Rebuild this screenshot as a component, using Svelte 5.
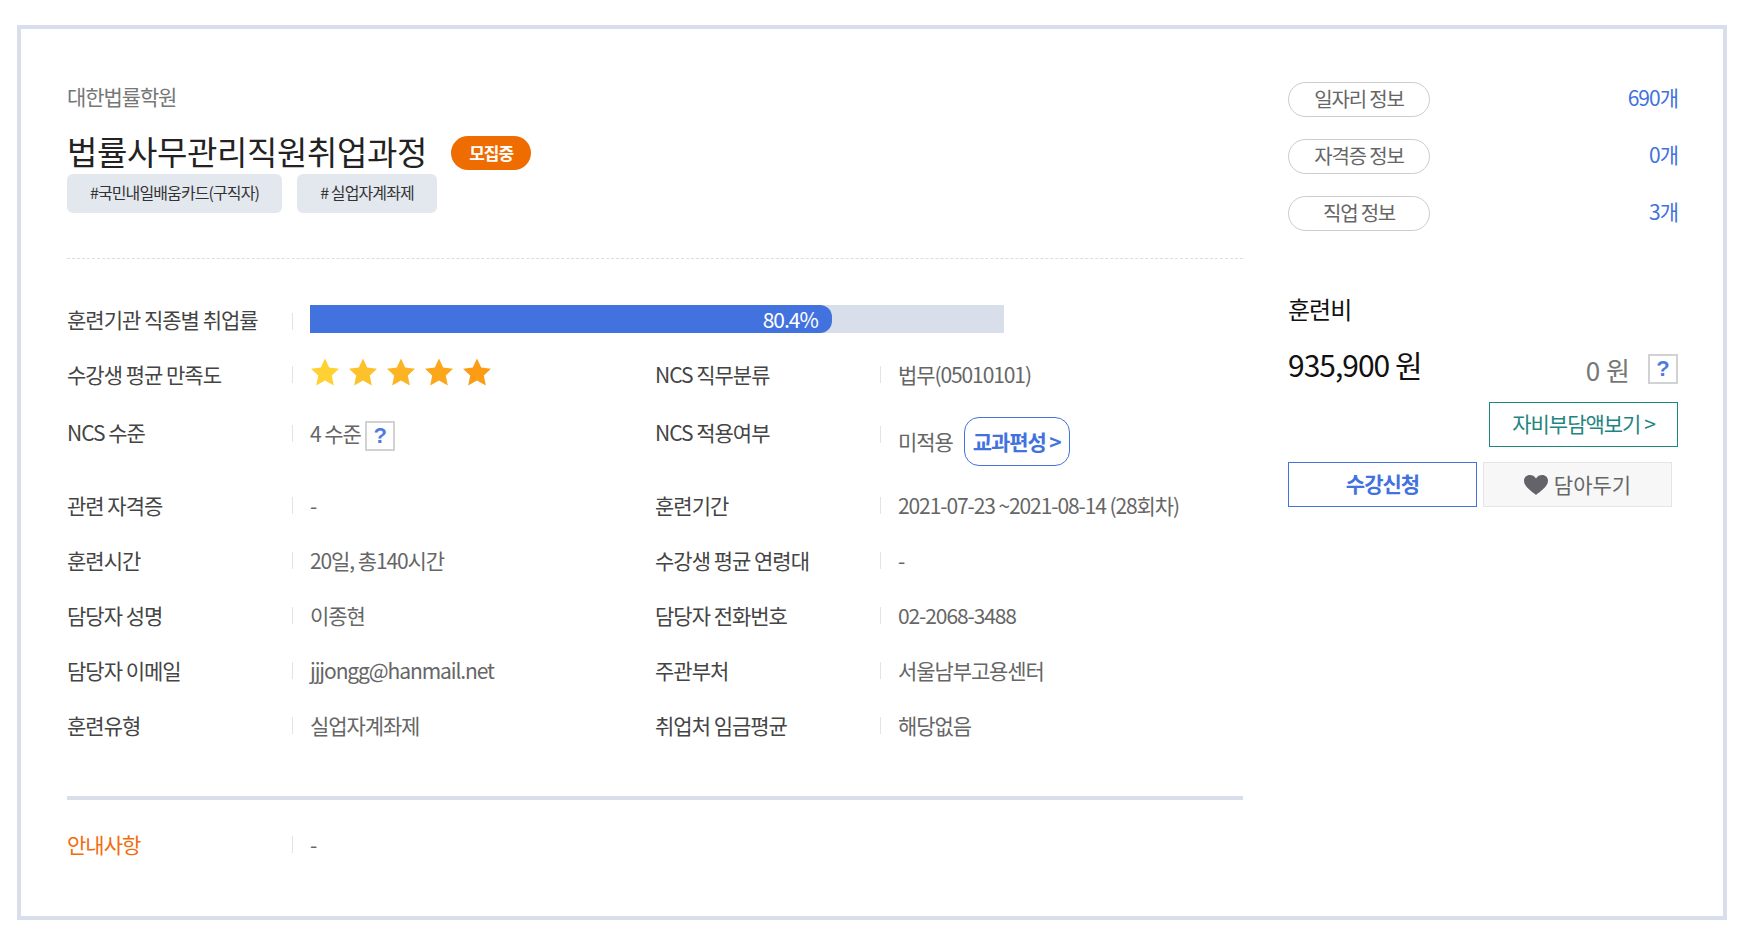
<script>
	const starColors = ['#ffd133', '#fdc12b', '#fcb424', '#fca61c', '#fb9c14'];

	const rows = [
		['관련 자격증', '-', '훈련기간', '2021-07-23 ~2021-08-14 (28회차)'],
		['훈련시간', '20일, 총140시간', '수강생 평균 연령대', '-'],
		['담당자 성명', '이종현', '담당자 전화번호', '02-2068-3488'],
		['담당자 이메일', 'jjjongg@hanmail.net', '주관부처', '서울남부고용센터'],
		['훈련유형', '실업자계좌제', '취업처 임금평균', '해당없음']
	];

	const infos = [
		['일자리 정보', '690개'],
		['자격증 정보', '0개'],
		['직업 정보', '3개']
	];
</script>

<div class="panel">
	<div class="main">
		<div class="academy">대한법률학원</div>
		<div class="title-line">
			<h1>법률사무관리직원취업과정</h1>
			<span class="badge">모집중</span>
		</div>
		<div class="tags">
			<span class="tag tag-a">#국민내일배움카드(구직자)</span>
			<span class="tag tag-b"># 실업자계좌제</span>
		</div>

		<div class="dashed"></div>

		<div class="row">
			<div class="label">훈련기관 직종별 취업률</div>
			<div class="bar-wrap">
				<div class="bar">
					<div class="fill">80.4%</div>
				</div>
			</div>
		</div>

		<div class="row">
			<div class="label">수강생 평균 만족도</div>
			<div class="value stars">
				{#each starColors as color}
					<svg width="30" height="28" viewBox="0 0 30 28">
						<path
							d="M15 0.5 L19.2 9.6 L29 10.8 L21.8 17.6 L23.8 27.5 L15 22.5 L6.2 27.5 L8.2 17.6 L1 10.8 L10.8 9.6 Z"
							fill={color}
						/>
					</svg>
				{/each}
			</div>
			<div class="label">NCS 직무분류</div>
			<div class="value">법무(05010101)</div>
		</div>

		<div class="row tall">
			<div class="label">NCS 수준</div>
			<div class="value level">4 수준 <span class="help">?</span></div>
			<div class="label">NCS 적용여부</div>
			<div class="value applied">
				<span class="applied-text">미적용</span>
				<span class="curriculum">교과편성 &gt;</span>
			</div>
		</div>

		{#each rows as r}
			<div class="row">
				<div class="label">{r[0]}</div>
				<div class="value">{r[1]}</div>
				<div class="label">{r[2]}</div>
				<div class="value">{r[3]}</div>
			</div>
		{/each}

		<div class="thick"></div>

		<div class="row notice">
			<div class="label">안내사항</div>
			<div class="value">-</div>
		</div>
	</div>

	<div class="side">
		{#each infos as info}
			<div class="info">
				<span class="pill">{info[0]}</span>
				<span class="count">{info[1]}</span>
			</div>
		{/each}

		<h2>훈련비</h2>
		<div class="fees">
			<span class="fee">935,900 원</span>
			<span class="self-fee">0 원</span>
			<span class="help">?</span>
		</div>
		<div class="self-line">
			<span class="self-btn">자비부담액보기 &gt;</span>
		</div>
		<div class="actions">
			<span class="apply">수강신청</span>
			<span class="keep">
				<svg width="24" height="20" viewBox="0 0 24 20">
					<path
						d="M12 20 C8 16.6 0 11.8 0 5.8 C0 2.4 2.6 0 5.8 0 C8.4 0 10.6 1.2 12 3.4 C13.4 1.2 15.6 0 18.2 0 C21.4 0 24 2.4 24 5.8 C24 11.8 16 16.6 12 20 Z"
						fill="#636369"
					/>
				</svg>
				담아두기
			</span>
		</div>
	</div>
</div>

<style>
	:global(body) {
		background: #fff;
	}

	.panel {
		display: flex;
		gap: 45px;
		box-sizing: border-box;
		width: 1710px;
		height: 895px;
		margin: 25px 0 0 17px;
		padding: 53px 45px 0 46px;
		border: 4px solid #d8deea;
		font-family: 'Noto Sans CJK KR', 'Noto Sans', sans-serif;
		font-size: 21px;
		letter-spacing: -1px;
		color: #666;
	}

	.main {
		width: 1176px;
		flex: none;
	}

	.side {
		flex: 1;
		min-width: 0;
	}

	.academy {
		height: 30px;
		line-height: 28px;
		letter-spacing: -1.1px;
		color: #777;
	}

	.title-line {
		display: flex;
		align-items: center;
		gap: 24px;
		margin-top: 18px;
		height: 42px;
	}

	h1 {
		margin: 0;
		font-size: 33px;
		font-weight: 400;
		letter-spacing: -0.35px;
		color: #222;
	}

	.badge {
		width: 80px;
		height: 34px;
		margin-top: 4px;
		border-radius: 17px;
		background: #ef6c00;
		color: #fff;
		font-size: 17px;
		font-weight: 700;
		line-height: 34px;
		text-align: center;
	}

	.tags {
		display: flex;
		gap: 15px;
		margin-top: 2px;
	}

	.tag {
		height: 39px;
		border-radius: 6px;
		background: #e3e7ee;
		color: #333;
		font-size: 16px;
		line-height: 37px;
		letter-spacing: -0.9px;
		text-align: center;
	}

	.tag-a {
		width: 215px;
	}

	.tag-b {
		width: 140px;
	}

	.dashed {
		margin: 45px 0 33px;
		border-top: 1px dashed #ddd;
	}

	.row {
		display: flex;
		align-items: center;
		box-sizing: border-box;
		height: 55px;
		padding-bottom: 2px;
	}

	.label {
		flex: none;
		width: 225px;
		color: #444;
	}

	.value {
		flex: none;
		position: relative;
		box-sizing: border-box;
		width: 363px;
		padding-left: 18px;
		letter-spacing: -1.1px;
		white-space: nowrap;
	}

	.value::before {
		content: '';
		position: absolute;
		left: 0;
		top: 50%;
		height: 17px;
		margin-top: -8px;
		border-left: 1px solid #e0e4e8;
	}

	.bar-wrap {
		flex: 1;
		position: relative;
		padding-left: 18px;
	}

	.bar-wrap::before {
		content: '';
		position: absolute;
		left: 0;
		top: 8px;
		height: 17px;
		border-left: 1px solid #e0e4e8;
	}

	.bar {
		width: 694px;
		height: 28px;
		background: #d8deea;
	}

	.fill {
		box-sizing: border-box;
		width: 75.2%;
		height: 28px;
		padding-right: 14px;
		border-radius: 0 12px 12px 0;
		background: #4272de;
		color: #fff;
		line-height: 28px;
		text-align: right;
	}

	.stars {
		display: flex;
		gap: 8px;
		align-items: center;
	}

	.stars svg {
		position: relative;
		top: -2px;
	}

	.help {
		display: inline-block;
		box-sizing: border-box;
		width: 30px;
		height: 30px;
		border: 2px solid #d2d2d2;
		color: #4f7be0;
		font-family: 'Liberation Sans', sans-serif;
		font-size: 22px;
		font-weight: 700;
		line-height: 26px;
		text-align: center;
		letter-spacing: 0;
	}

	.level .help {
		vertical-align: middle;
		margin-left: 1px;
	}

	.tall {
		height: 76px;
		align-items: flex-start;
	}

	.tall .label {
		line-height: 60px;
	}

	.tall .level {
		height: 62px;
		line-height: 62px;
	}

	.tall .applied {
		display: flex;
		align-items: center;
		gap: 11px;
		height: 49px;
		margin-top: 15px;
	}

	.tall .applied::before {
		top: 0;
		margin-top: 9px;
	}

	.applied-text {
		margin-bottom: 2px;
	}

	.curriculum {
		box-sizing: border-box;
		width: 106px;
		height: 49px;
		border: 1px solid #4272de;
		border-radius: 15px;
		color: #4272de;
		font-weight: 700;
		line-height: 47px;
		text-align: center;
	}

	.thick {
		margin-top: 43px;
		border-top: 4px solid #d8deea;
	}

	.notice {
		margin-top: 17px;
	}

	.notice .label {
		color: #f26c0d;
	}

	.info {
		display: flex;
		align-items: center;
		justify-content: space-between;
		height: 35px;
		margin-bottom: 22px;
	}

	.pill {
		box-sizing: border-box;
		width: 142px;
		height: 35px;
		border: 1px solid #ccc;
		border-radius: 18px;
		font-size: 20px;
		line-height: 31px;
		text-align: center;
		letter-spacing: -1.2px;
	}

	.count {
		margin-top: -6px;
		color: #4272de;
	}

	h2 {
		margin: 60px 0 0;
		font-size: 24px;
		font-weight: 400;
		line-height: 36px;
		letter-spacing: -1px;
		color: #111;
	}

	.fees {
		display: flex;
		align-items: center;
		margin-top: 22px;
		height: 40px;
	}

	.fee {
		flex: 1;
		margin-bottom: 10px;
		font-size: 30px;
		letter-spacing: -1px;
		color: #111;
	}

	.self-fee {
		margin-right: 18px;
		font-size: 26px;
		letter-spacing: 0;
		color: #777;
	}

	.self-line {
		display: flex;
		justify-content: flex-end;
		margin-top: 13px;
	}

	.self-btn {
		box-sizing: border-box;
		width: 189px;
		height: 45px;
		border: 1px solid #1f8580;
		color: #1f8580;
		line-height: 41px;
		text-align: center;
	}

	.actions {
		display: flex;
		gap: 6px;
		margin-top: 15px;
	}

	.apply,
	.keep {
		box-sizing: border-box;
		width: 189px;
		height: 45px;
		line-height: 41px;
		text-align: center;
	}

	.apply {
		border: 1px solid #4272de;
		color: #4272de;
		font-weight: 700;
	}

	.keep {
		display: flex;
		align-items: center;
		justify-content: center;
		gap: 6px;
		border: 1px solid #e5e5e5;
		background: #f7f7f7;
		color: #666;
		letter-spacing: 0;
	}
</style>
